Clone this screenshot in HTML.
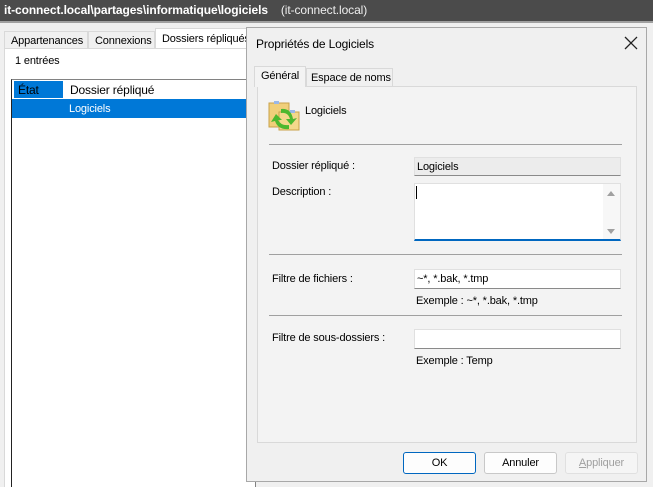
<!DOCTYPE html>
<html><head><meta charset="utf-8"><style>
*{margin:0;padding:0;box-sizing:border-box}
html{width:653px;height:487px;overflow:hidden}
body{width:653px;height:487px;overflow:hidden;background:#f0f0f0;font-family:"Liberation Sans",sans-serif;font-size:11px;letter-spacing:-0.15px;color:#000;position:relative}
.a{position:absolute;white-space:nowrap}
</style></head><body>
<div class="a" style="left:0;top:0;width:653px;height:21px;background:#4b4b4b;color:#fff;font-size:12px;letter-spacing:-0.1px;line-height:21px;padding-left:4px"><b>it-connect.local\partages\informatique\logiciels</b>&nbsp;&nbsp;&nbsp;&nbsp;<span style="color:#eee">(it-connect.local)</span></div>
<div class="a" style="left:0;top:21px;width:653px;height:2px;background:#a0a0a0"></div>
<div class="a" style="left:4px;top:31px;width:84px;height:18px;border:1px solid #d9d9d9;border-bottom:none;padding:3px 0 0 6px">Appartenances</div>
<div class="a" style="left:88px;top:31px;width:67px;height:18px;border:1px solid #d9d9d9;border-bottom:none;padding:3px 0 0 6px">Connexions</div>
<div class="a" style="left:155px;top:28px;width:100px;height:21px;background:#fff;border:1px solid #d9d9d9;border-bottom:none;padding:4px 0 0 6px">Dossiers répliqués</div>
<div class="a" style="left:4px;top:48px;width:250px;height:439px;background:#fff;border:1px solid #d9d9d9;border-bottom:none"></div>
<div class="a" style="left:15px;top:55px">1 entrées</div>
<div class="a" style="left:11px;top:79px;width:245px;height:408px;background:#fff;border:1px solid #828282;border-left:1px solid #222;border-bottom:none"></div>
<div class="a" style="left:14px;top:81px;width:49px;height:17px;background:#0078d7;color:#000;padding:2px 0 0 4px;font-size:12px">État</div>
<div class="a" style="left:70px;top:83px;font-size:12px">Dossier répliqué</div>
<div class="a" style="left:12px;top:99px;width:244px;height:19px;background:#0078d7;color:#fff;padding:4px 0 0 57px">Logiciels</div>
<div class="a" style="left:246px;top:27px;width:401px;height:455px;background:#f0f0f0;border:1px solid #a8a8a8"></div>
<div class="a" style="left:256px;top:37px;font-size:12px">Propriétés de Logiciels</div>
<svg class="a" style="left:624px;top:36px" width="14" height="14"><path d="M1 1L13 13M13 1L1 13" stroke="#222" stroke-width="1.3"/></svg>
<div class="a" style="left:257px;top:86px;width:380px;height:357px;border:1px solid #d9d9d9;background:#f3f3f3"></div>
<div class="a" style="left:306px;top:68px;width:87px;height:19px;border:1px solid #d9d9d9;border-bottom:none;padding:3px 0 0 4px">Espace de noms</div>
<div class="a" style="left:254px;top:66px;width:52px;height:21px;background:#f3f3f3;border:1px solid #d9d9d9;border-bottom:none;padding:3px 0 0 6px">Général</div>
<svg class="a" style="left:267px;top:99px" width="36" height="34" viewBox="0 0 36 34">
<rect x="2" y="4" width="20" height="24" fill="#f0cf7a" stroke="#c9a24a"/>
<rect x="12" y="13" width="20" height="18" fill="#f3d88c" stroke="#c9a24a"/>
<rect x="7" y="2" width="5" height="3" fill="#9ab8e8"/><rect x="23" y="11" width="5" height="3" fill="#9ab8e8"/>
<path d="M14 10 Q24 9 26 20 L30 19 L24 26 L19 20 L23 20 Q21 13 14 14Z" fill="#4cb82f"/>
<path d="M22 30 Q11 31 8 22 L4 23 L9 15 L15 21 L11 21 Q14 27 22 26Z" fill="#4cb82f"/>
</svg>
<div class="a" style="left:305px;top:105px">Logiciels</div>
<div class="a" style="left:269px;top:144px;width:353px;height:1px;background:#a0a0a0"></div>
<div class="a" style="left:272px;top:160px">Dossier répliqué :</div>
<div class="a" style="left:414px;top:157px;width:207px;height:19px;background:#ececec;border:1px solid #e0e0e0;border-bottom:1px solid #8a8a8a;padding:3px 0 0 2px">Logiciels</div>
<div class="a" style="left:272px;top:186px">Description :</div>
<div class="a" style="left:414px;top:183px;width:207px;height:58px;background:#fff;border:1px solid #e0e0e0;border-bottom:2px solid #0067c0"></div>
<div class="a" style="left:416px;top:186px;width:1px;height:13px;background:#000"></div>
<div class="a" style="left:603px;top:184px;width:17px;height:55px;background:#f7f7f7"></div>
<svg class="a" style="left:606px;top:190px" width="10" height="48"><path d="M1 6L5 1L9 6Z M1 39L5 44L9 39Z" fill="#a0a0a0"/></svg>
<div class="a" style="left:269px;top:254px;width:353px;height:1px;background:#a0a0a0"></div>
<div class="a" style="left:272px;top:273px">Filtre de fichiers :</div>
<div class="a" style="left:414px;top:269px;width:207px;height:20px;background:#fff;border:1px solid #e0e0e0;border-bottom:1px solid #8a8a8a;padding:3px 0 0 2px">~*, *.bak, *.tmp</div>
<div class="a" style="left:416px;top:295px">Exemple : ~*, *.bak, *.tmp</div>
<div class="a" style="left:269px;top:315px;width:353px;height:1px;background:#a0a0a0"></div>
<div class="a" style="left:272px;top:332px">Filtre de sous-dossiers :</div>
<div class="a" style="left:414px;top:329px;width:207px;height:20px;background:#fff;border:1px solid #e0e0e0;border-bottom:1px solid #8a8a8a"></div>
<div class="a" style="left:416px;top:355px">Exemple : Temp</div>
<div class="a" style="left:403px;top:452px;width:73px;height:22px;background:#fdfdfd;border:1px solid #0067c0;border-radius:3px;text-align:center;line-height:20px">OK</div>
<div class="a" style="left:484px;top:452px;width:73px;height:22px;background:#fdfdfd;border:1px solid #c8c8c8;border-radius:3px;text-align:center;line-height:20px">Annuler</div>
<div class="a" style="left:565px;top:452px;width:73px;height:22px;background:#f5f5f5;border:1px solid #e0e0e0;border-radius:3px;text-align:center;line-height:20px;color:#a0a0a0"><u>A</u>ppliquer</div>
</body></html>
